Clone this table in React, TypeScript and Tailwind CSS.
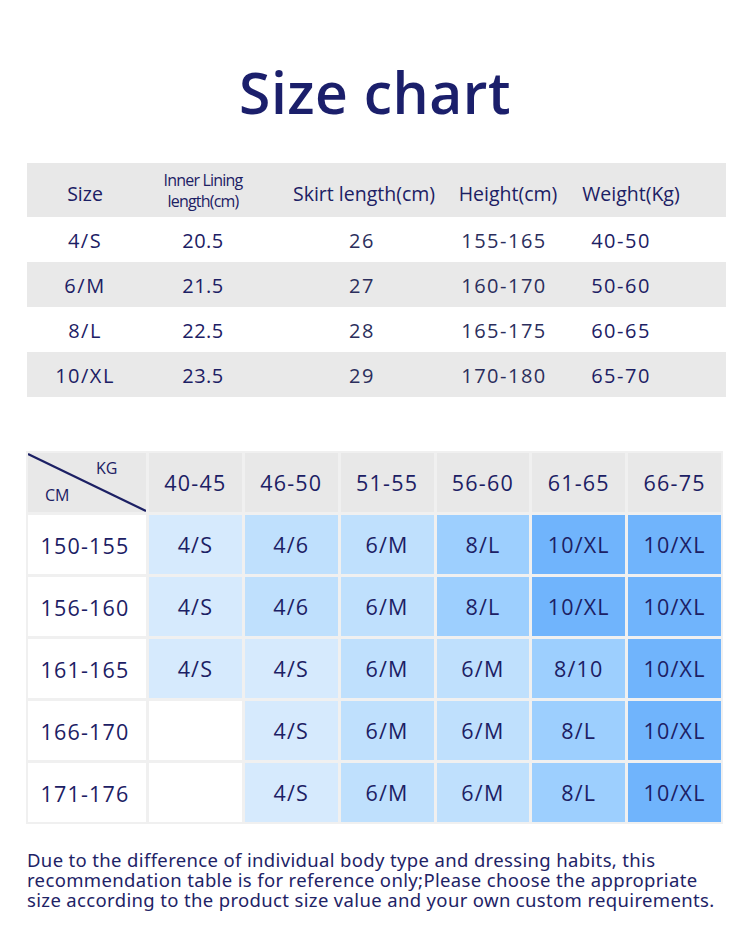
import React from "react";

const NAVY = "text-[#1c2064]";

const t1Header = ["Size", "", "Skirt length(cm)", "Height(cm)", "Weight(Kg)"];
const t1Rows = [
  ["4/S", "20.5", "26", "155-165", "40-50"],
  ["6/M", "21.5", "27", "160-170", "50-60"],
  ["8/L", "22.5", "28", "165-175", "60-65"],
  ["10/XL", "23.5", "29", "170-180", "65-70"],
];

const kgHeads = ["40-45", "46-50", "51-55", "56-60", "61-65", "66-75"];

type Cell = [string, number];
const t2Rows: { cm: string; cells: Cell[] }[] = [
  { cm: "150-155", cells: [["4/S", 1], ["4/6", 2], ["6/M", 2], ["8/L", 3], ["10/XL", 4], ["10/XL", 4]] },
  { cm: "156-160", cells: [["4/S", 1], ["4/6", 2], ["6/M", 2], ["8/L", 3], ["10/XL", 4], ["10/XL", 4]] },
  { cm: "161-165", cells: [["4/S", 1], ["4/S", 1], ["6/M", 2], ["6/M", 2], ["8/10", 3], ["10/XL", 4]] },
  { cm: "166-170", cells: [["", 0], ["4/S", 1], ["6/M", 2], ["6/M", 2], ["8/L", 3], ["10/XL", 4]] },
  { cm: "171-176", cells: [["", 0], ["4/S", 1], ["6/M", 2], ["6/M", 2], ["8/L", 3], ["10/XL", 4]] },
];

const levelBg: Record<number, string> = {
  0: "bg-white",
  1: "bg-[#d6eafd]",
  2: "bg-[#bfe0fd]",
  3: "bg-[#9dcffe]",
  4: "bg-[#70b4fc]",
};

export default function App() {
  return (
    <div
      className={`w-[750px] h-[945px] bg-white ${NAVY} overflow-hidden`}
      style={{ fontFamily: '"Open Sans", "Noto Sans", sans-serif' }}
    >
      <h1 className="mt-[63px] h-[60px] leading-none text-[57px] font-semibold text-center text-[#1b1f6b] tracking-[0.5px] pt-[1px]">
        Size chart
      </h1>

      {/* Table 1 */}
      <div className="mt-[40px] ml-[27px] w-[699px]">
        <div className="grid grid-cols-[116px_120px_202px_86px_160px_1fr] h-[54px] bg-[#e8e8e8] items-center">
          <div className="flex justify-center text-[19.5px] whitespace-nowrap pt-[8px]">Size</div>
          <div className="flex flex-col items-center text-[16px] leading-[21px] tracking-[-0.8px] pt-[1px]">
            <span>Inner Lining</span>
            <span>length(cm)</span>
          </div>
          <div className="flex justify-center text-[19.5px] whitespace-nowrap pt-[8px]">{t1Header[2]}</div>
          <div className="flex justify-center text-[19.5px] whitespace-nowrap pt-[8px]">{t1Header[3]}</div>
          <div className="flex justify-center text-[19.5px] whitespace-nowrap pt-[8px]">{t1Header[4]}</div>
          <div />
        </div>
        {t1Rows.map((r, i) => (
          <div
            key={i}
            className={`grid grid-cols-[116px_120px_202px_86px_160px_1fr] h-[45px] items-center text-[20px] tracking-[1.5px] pt-[3px] ${
              i % 2 === 1 ? "bg-[#e9e9e9]" : "bg-white"
            }`}
          >
            <div className="flex justify-center whitespace-nowrap">{r[0]}</div>
            <div className="flex justify-center whitespace-nowrap tracking-[0.5px]">{r[1]}</div>
            <div className="flex justify-center whitespace-nowrap text-[#2b2e5c] pr-[4px]">{r[2]}</div>
            <div className="flex justify-center whitespace-nowrap text-[#2b2e5c] pr-[8px]">{r[3]}</div>
            <div className="flex justify-center whitespace-nowrap pr-[20px]">{r[4]}</div>
            <div />
          </div>
        ))}
      </div>

      {/* Table 2 */}
      <div className="mt-[54px] ml-[26px] w-[697px] bg-[#f0f0f0] p-[2px] grid grid-cols-[118px_repeat(6,1fr)] auto-rows-[59px] gap-[3px] text-[21.5px] tracking-[1.2px]">
        <div className="relative bg-[#e8e8e8]">
          <svg className="absolute inset-0" width="118" height="59" viewBox="0 0 118 59">
            <line x1="0" y1="1" x2="118" y2="58" stroke="#1c2064" strokeWidth="2.2" />
          </svg>
          <span className="absolute left-[68px] top-[3px] text-[16px] tracking-normal">KG</span>
          <span className="absolute left-[17px] top-[30px] text-[16px] tracking-normal">CM</span>
        </div>
        {kgHeads.map((k) => (
          <div key={k} className="bg-[#e8e8e8] flex items-center justify-center pt-[2px]">
            {k}
          </div>
        ))}
        {t2Rows.map((row) => (
          <React.Fragment key={row.cm}>
            <div className="bg-white flex items-center justify-center pt-[4px] pr-[4px]">{row.cm}</div>
            {row.cells.map(([txt, lvl], j) => (
              <div key={j} className={`${levelBg[lvl]} flex items-center justify-center pt-[2px]`}>
                {txt}
              </div>
            ))}
          </React.Fragment>
        ))}
      </div>

      {/* Footer note */}
      <p
        className="mt-[26px] ml-[27px] w-[710px] text-[18.5px] leading-[20px] tracking-[0.35px] text-[#1e2366] whitespace-nowrap"
        style={{ fontFamily: '"Noto Sans", sans-serif' }}
      >
        Due to the difference of individual body type and dressing habits, this
        <br />
        recommendation table is for reference only;Please choose the appropriate
        <br />
        size according to the product size value and your own custom requirements.
      </p>
    </div>
  );
}
